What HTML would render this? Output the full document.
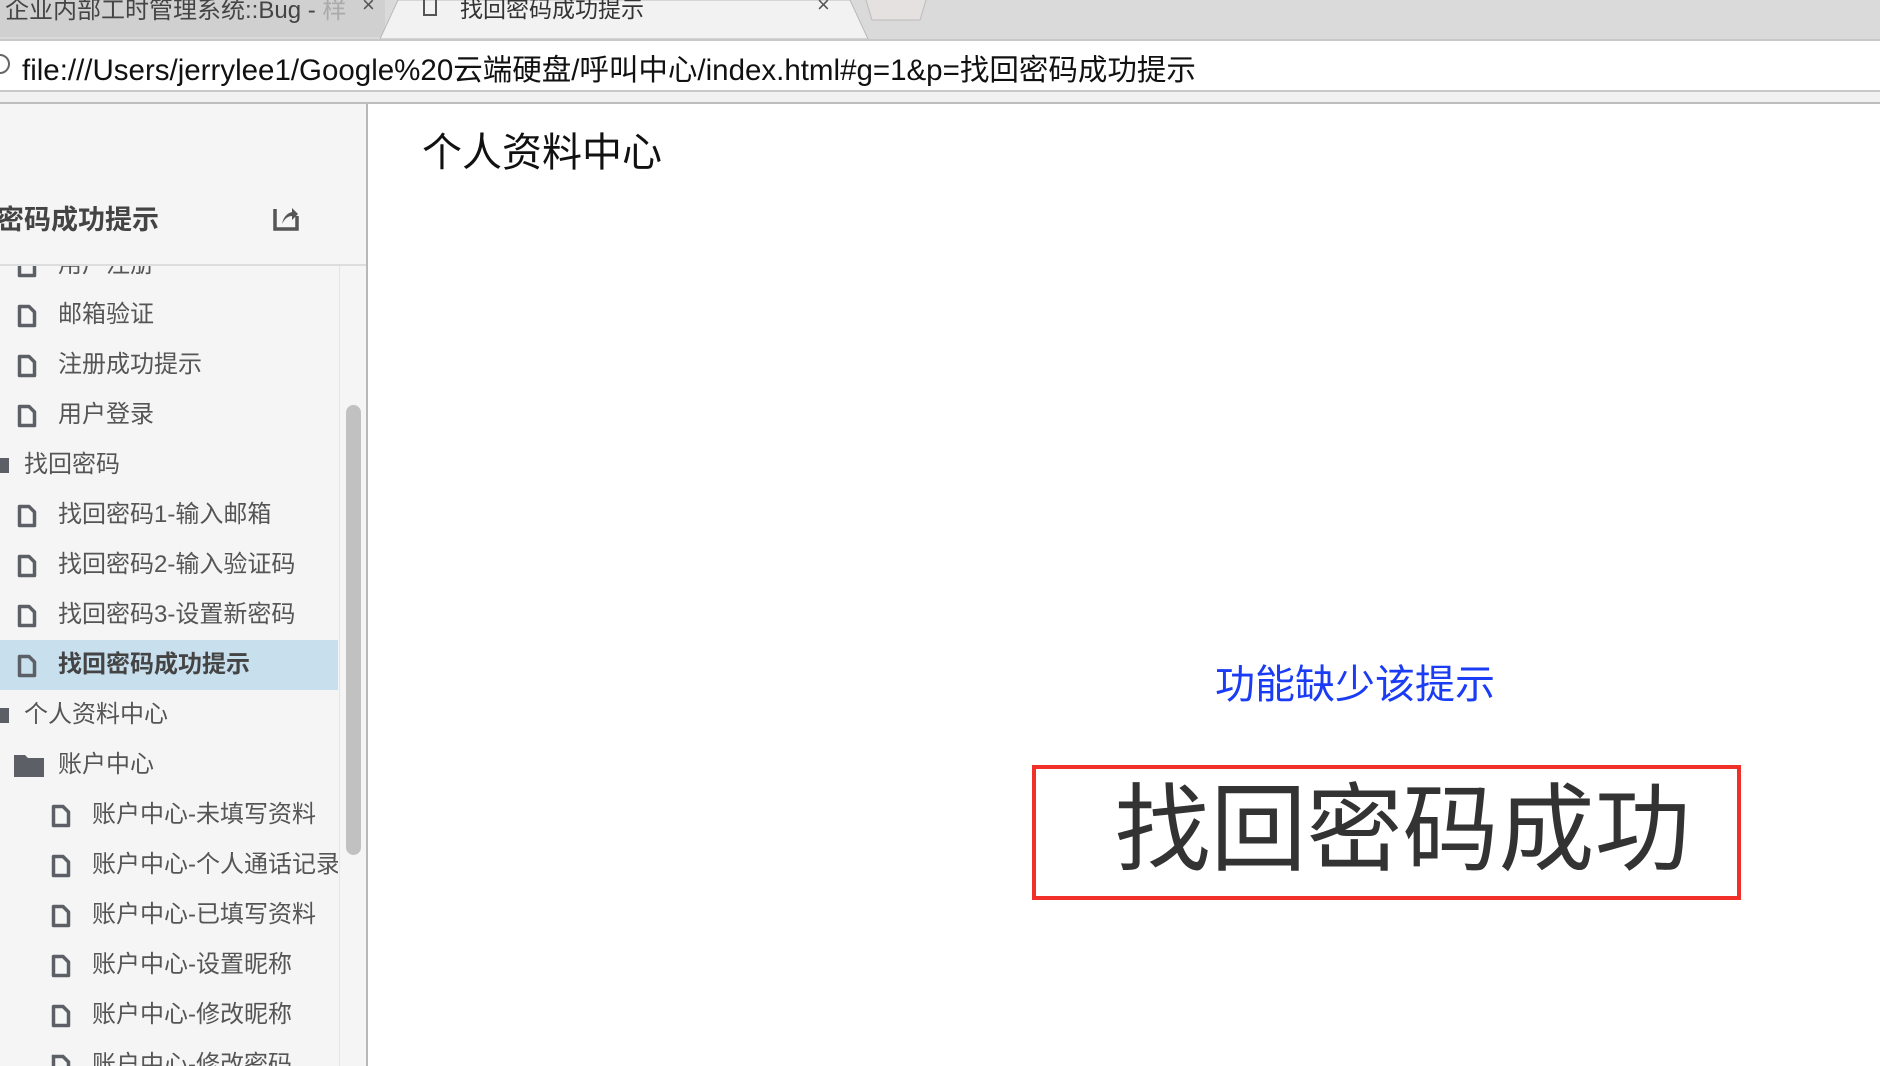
<!DOCTYPE html>
<html><head><meta charset="utf-8"><style>
*{margin:0;padding:0;box-sizing:border-box}
html{overflow:hidden}
body{width:1880px;height:1066px;overflow:hidden;background:#fff;position:relative;font-family:"Liberation Sans","Noto Sans CJK SC",sans-serif}
.abs{position:absolute}
#tabs{left:0;top:0;width:1880px;height:39px;background:#dadada}
#addr{left:0;top:39px;width:1880px;height:53px;background:#fff;border-top:2px solid #c8c8c8;border-bottom:2px solid #c8c8c8}
#strip{left:0;top:92px;width:1880px;height:12px;background:#f1f1f1;border-bottom:2px solid #bdbdbd}
#side{left:0;top:104px;width:368px;height:962px;background:#f5f5f5;border-right:2px solid #b8b8b8;overflow:hidden}
.it{position:absolute;left:0;width:338px;height:50px;font-size:24px;color:#555;line-height:50px;white-space:nowrap}
.it svg{position:absolute;top:14px}
.it span{position:absolute}
</style></head><body>
<div id="tabs" class="abs">
  <div class="abs" style="left:0;top:0;width:385px;height:37px;background:#d0d0d0"></div>
  <div class="abs" style="left:5px;top:-10px;font-size:24px;color:#444;white-space:nowrap">企业内部工时管理系统::Bug - <span style="color:#aaa">样</span></div>
  <div class="abs" style="left:362px;top:-8px;font-size:22px;color:#555">×</div>
  <svg class="abs" style="left:380px;top:0" width="500" height="39"><path d="M0 39 L18 0 L470 0 L488 39 Z" fill="#f2f2f2" stroke="#b9b9b9"/></svg>
  <div class="abs" style="left:423px;top:0;width:14px;height:16px;border:2px solid #555;border-top:none"></div>
  <div class="abs" style="left:460px;top:-10px;font-size:23px;color:#333;white-space:nowrap">找回密码成功提示</div>
  <div class="abs" style="left:817px;top:-8px;font-size:22px;color:#555">×</div>
  <svg class="abs" style="left:860px;top:0" width="80" height="39"><path d="M6 0 L12 20 L60 20 L66 0" fill="#e6e1e1" stroke="#bbb"/></svg>
</div>
<div id="addr" class="abs">
  <div class="abs" style="left:-10px;top:13px;width:20px;height:20px;border:2px solid #666;border-radius:50%"></div>
  <div class="abs" style="left:22px;top:6px;font-size:29.5px;color:#111;white-space:nowrap">file:///Users/jerrylee1/Google%20云端硬盘/呼叫中心/index.html#g=1&amp;p=找回密码成功提示</div>
</div>
<div id="strip" class="abs"></div>
<div id="side" class="abs">
  <div class="abs" style="left:0;top:0;width:366px;height:162px;border-bottom:2px solid #ddd;background:#f5f5f5;z-index:2">
    <div class="abs" style="left:-3px;top:94px;font-size:27px;font-weight:bold;color:#444;white-space:nowrap">密码成功提示</div>
    <svg class="abs" style="left:272px;top:100px" width="28" height="28" viewBox="0 0 28 28"><path d="M3 5 V25 H25 V12" fill="none" stroke="#555" stroke-width="3.5"/><path d="M10 20 Q12 10 20 8 V4 L26 10 L20 16 V12 Q14 12 10 20Z" fill="#555"/></svg>
  </div>
  <div class="abs" style="left:339px;top:162px;width:27px;height:900px;background:#f5f5f5;border-left:1px solid #e4e4e4"></div>
  <div class="abs" style="left:346px;top:301px;width:15px;height:450px;background:#c1c1c1;border-radius:8px"></div>
  <div class="abs" style="left:0;top:536px;width:338px;height:50px;background:#c8dfee"></div>
</div>
<div class="abs" style="left:0;top:106px;width:338px;height:960px;overflow:hidden">
  <div id="list"></div>
</div>
<script>
var items=[[1,'用户注册',134],[1,'邮箱验证',184],[1,'注册成功提示',234],[1,'用户登录',284],[0,'找回密码',334],[1,'找回密码1-输入邮箱',384],[1,'找回密码2-输入验证码',434],[1,'找回密码3-设置新密码',484],[1,'找回密码成功提示',534,1],[0,'个人资料中心',584],[2,'账户中心',634],[3,'账户中心-未填写资料',684],[3,'账户中心-个人通话记录',734],[3,'账户中心-已填写资料',784],[3,'账户中心-设置昵称',834],[3,'账户中心-修改昵称',884]];
var h='';
var file=function(x){return '<svg style="left:'+x+'px" width="20" height="24" viewBox="0 0 20 24"><path d="M2.5 2.5 H12 L17.5 8 V21.5 H2.5 Z" fill="none" stroke="#5c6066" stroke-width="3.5" stroke-linejoin="round"/></svg>';};
items.forEach(function(a){
 var t=a[0],s='';
 if(t==0){s='<div style="position:absolute;left:0;top:18px;width:9px;height:15px;background:#5c6066"></div><span style="left:24px">'+a[1]+'</span>';}
 else if(t==1){s=file(17)+'<span style="left:58px">'+a[1]+'</span>';}
 else if(t==2){s='<svg style="left:14px;top:15px" width="30" height="22" viewBox="0 0 30 22"><path d="M0 0 H11 L14 3 H30 V22 H0Z" fill="#5c6066"/></svg><span style="left:58px">'+a[1]+'</span>';}
 else {s=file(51)+'<span style="left:92px">'+a[1]+'</span>';}
 h+='<div class="it" style="top:'+a[2]+'px;'+(a[3]?'font-weight:bold;color:#444':'')+'">'+s+'</div>';
});
h+='<div class="it" style="top:934px;height:26px;overflow:hidden"><svg style="left:51px" width="20" height="24" viewBox="0 0 20 24"><path d="M2.5 2.5 H12 L17.5 8 V21.5 H2.5 Z" fill="none" stroke="#5c6066" stroke-width="3.5"/></svg><span style="left:92px">账户中心-修改密码</span></div>';
document.getElementById('list').innerHTML=h;
</script>
<div class="abs" style="left:422px;top:120px;font-size:40px;color:#111;white-space:nowrap">个人资料中心</div>
<div class="abs" style="left:1215px;top:652px;font-size:40px;color:#1a3cf5;white-space:nowrap">功能缺少该提示</div>
<div class="abs" style="left:1032px;top:765px;width:709px;height:135px;border:4px solid #f2302a"></div>
<div class="abs" style="left:1048px;top:765px;width:709px;height:135px;text-align:center;line-height:131px;font-size:96px;color:#333;white-space:nowrap">找回密码成功</div>
</body></html>
